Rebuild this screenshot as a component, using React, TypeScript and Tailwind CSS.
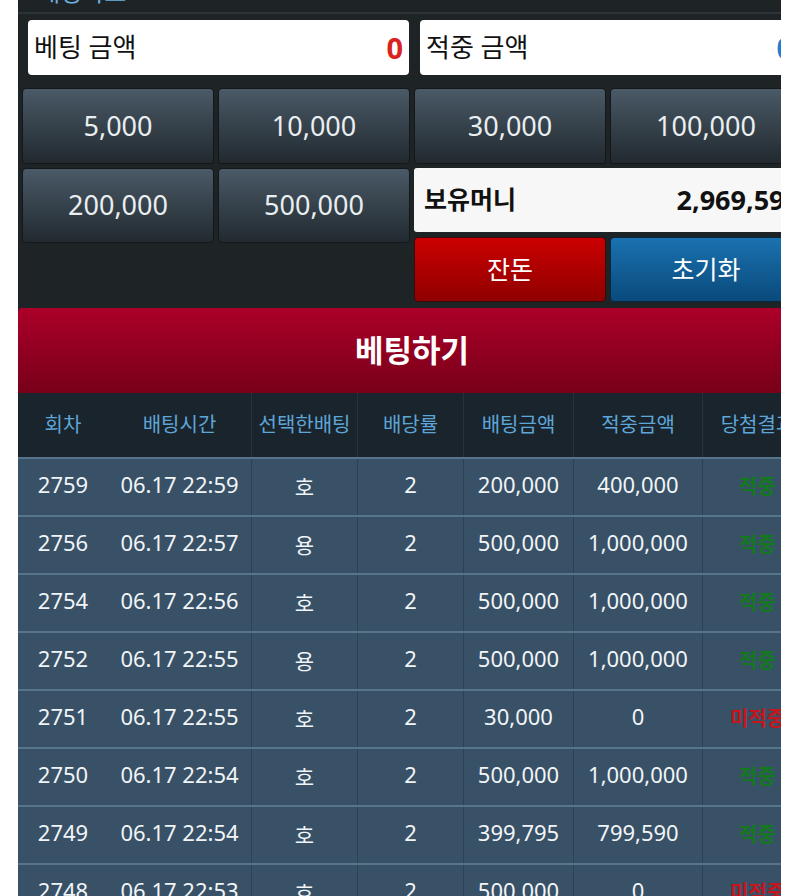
import React from 'react';

interface BetRow {
    round: string;
    time: string;
    pick: string;
    odds: string;
    amount: string;
    win: string;
    hit: boolean;
}

const rows: BetRow[] = [
    { round: '2759', time: '06.17 22:59', pick: '호', odds: '2', amount: '200,000', win: '400,000', hit: true },
    { round: '2756', time: '06.17 22:57', pick: '용', odds: '2', amount: '500,000', win: '1,000,000', hit: true },
    { round: '2754', time: '06.17 22:56', pick: '호', odds: '2', amount: '500,000', win: '1,000,000', hit: true },
    { round: '2752', time: '06.17 22:55', pick: '용', odds: '2', amount: '500,000', win: '1,000,000', hit: true },
    { round: '2751', time: '06.17 22:55', pick: '호', odds: '2', amount: '30,000', win: '0', hit: false },
    { round: '2750', time: '06.17 22:54', pick: '호', odds: '2', amount: '500,000', win: '1,000,000', hit: true },
    { round: '2749', time: '06.17 22:54', pick: '호', odds: '2', amount: '399,795', win: '799,590', hit: true },
    { round: '2748', time: '06.17 22:53', pick: '호', odds: '2', amount: '500,000', win: '0', hit: false },
];

const headers = ['회차', '배팅시간', '선택한배팅', '배당률', '배팅금액', '적중금액', '당첨결과'];

const cols = 'grid grid-cols-[90px_143px_106px_106px_110px_129px_110px]';

const ChipButton: React.FC<{ label: string; className?: string }> = ({ label, className = '' }) => (
    <button
        className={`flex items-center justify-center rounded-[4px] border border-[#14181b] bg-linear-to-b from-[#4a5a67] to-[#222a30] text-[27px] text-[#e9eef1] ${className}`}
    >
        {label}
    </button>
);

const App: React.FC = () => {
    return (
        <div
            className="min-h-screen bg-white pl-[18px]"
            style={{ fontFamily: '"Noto Sans", "Noto Sans CJK KR", sans-serif' }}
        >
            <div className="w-[763px] overflow-hidden bg-[#1e2326]">
                <div className="w-[794px]">
                    {/* title strip, mostly scrolled off */}
                    <div className="h-[14px] overflow-hidden border-b-2 border-[#2c3438] pl-[20px]">
                        <div className="-mt-[22px] text-[24px] leading-[28px] text-[#6cb0dc]">배팅카트</div>
                    </div>

                    {/* amount boxes */}
                    <div className="flex gap-[11px] pl-[10px] pt-[6px] pb-[13px]">
                        <div className="flex h-[55px] w-[381px] items-center justify-between rounded-[4px] bg-white px-[6px]">
                            <span className="text-[26px] text-[#111]">베팅 금액</span>
                            <span className="text-[29px] font-bold text-[#d8231f]">0</span>
                        </div>
                        <div className="flex h-[55px] w-[381px] items-center justify-between rounded-[4px] bg-white pl-[6px] pr-[8px]">
                            <span className="text-[26px] text-[#111]">적중 금액</span>
                            <span className="text-[29px] font-bold text-[#1f7fd0]">0</span>
                        </div>
                    </div>

                    {/* chip buttons */}
                    <div className="flex w-[788px] flex-col gap-[4px] px-[4px]">
                        <div className="grid h-[76px] grid-cols-4 gap-[4px]">
                            <ChipButton label="5,000" />
                            <ChipButton label="10,000" />
                            <ChipButton label="30,000" />
                            <ChipButton label="100,000" />
                        </div>
                        <div className="grid grid-cols-4 gap-[4px]">
                            <ChipButton label="200,000" className="h-[75px] self-start" />
                            <ChipButton label="500,000" className="h-[75px] self-start" />
                            <div className="col-span-2 flex flex-col gap-[5px]">
                                <div className="flex h-[64px] items-center justify-between rounded-[3px] bg-[#f7f7f7] pl-[10px] pr-[2px]">
                                    <span className="text-[25px] font-bold text-[#111]">보유머니</span>
                                    <span className="text-[27px] font-bold text-[#111]">2,969,590</span>
                                </div>
                                <div className="grid h-[65px] grid-cols-2 gap-[4px]">
                                    <button className="rounded-[4px] border border-[#3a0a0a] bg-linear-to-b from-[#cc0000] to-[#8f0000] text-[25px] text-white">
                                        잔돈
                                    </button>
                                    <button className="rounded-[4px] border border-[#0a2a44] bg-linear-to-b from-[#1a72b0] to-[#0a4a7c] text-[25px] text-white">
                                        초기화
                                    </button>
                                </div>
                            </div>
                        </div>
                    </div>

                    {/* submit bar */}
                    <button className="mt-[6px] flex h-[85px] w-[788px] items-center justify-center rounded-tl-[4px] bg-linear-to-b from-[#ac0029] to-[#780018] text-[31px] font-bold text-white">
                        베팅하기
                    </button>

                    {/* history table */}
                    <div className={`${cols} h-[64px] bg-[#1a242c] text-[20px] text-[#5ea6d8]`}>
                        {headers.map((h, i) => (
                            <div
                                key={h}
                                className={`flex items-center justify-center whitespace-nowrap ${i > 1 ? 'border-l border-[#27323b]' : ''}`}
                            >
                                {h}
                            </div>
                        ))}
                    </div>
                    {rows.map((r) => {
                        const cells = [r.round, r.time, r.pick, r.odds, r.amount, r.win];
                        return (
                            <div
                                key={r.round}
                                className={`${cols} h-[58px] border-t-2 border-[#56758c] bg-[#385167] text-[22px] text-[#f2f5f7]`}
                            >
                                {cells.map((c, i) => (
                                    <div
                                        key={i}
                                        className={`flex items-center justify-center whitespace-nowrap ${i > 1 ? 'border-l border-[#2a4256]' : ''} ${i === 2 ? 'pt-[2px] text-[21px]' : 'pb-[6px]'}`}
                                    >
                                        {c}
                                    </div>
                                ))}
                                <div
                                    className={`flex items-center justify-center whitespace-nowrap border-l border-[#2a4256] text-[20px] font-bold ${r.hit ? 'text-[#127a1c]' : 'text-[#c5161d]'}`}
                                >
                                    {r.hit ? '적중' : '미적중'}
                                </div>
                            </div>
                        );
                    })}
                </div>
            </div>
        </div>
    );
};

export default App;
